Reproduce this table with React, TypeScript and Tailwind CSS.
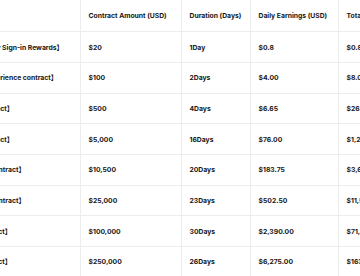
import React from "react";

type Plan = {
  name: string;
  amount: string;
  days: string;
  daily: string;
  total: string;
};

const plans: Plan[] = [
  { name: "【Daily Sign-in Rewards】", amount: "$20", days: "1Day", daily: "$0.8", total: "$0.8" },
  { name: "【Experience contract】", amount: "$100", days: "2Days", daily: "$4.00", total: "$8.00" },
  { name: "【Impact】", amount: "$500", days: "4Days", daily: "$6.65", total: "$26.60" },
  { name: "【Impact】", amount: "$5,000", days: "16Days", daily: "$76.00", total: "$1,216.00" },
  { name: "【X contract】", amount: "$10,500", days: "20Days", daily: "$183.75", total: "$3,675.00" },
  { name: "【X contract】", amount: "$25,000", days: "23Days", daily: "$502.50", total: "$11,557.50" },
  { name: "【Select】", amount: "$100,000", days: "30Days", daily: "$2,390.00", total: "$71,700.00" },
  { name: "【Select】", amount: "$250,000", days: "26Days", daily: "$6,275.00", total: "$163,150.00" },
];

const cell =
  "h-[30.7px] px-[8px] text-left align-middle border-r border-b border-[#ececec] whitespace-nowrap";

export default function App() {
  return (
    <div className="w-[360px] h-[276px] overflow-hidden bg-white">
      {/* table is scrolled sideways, first column partly hidden */}
      <table className="-ml-[31px] w-[512px] min-w-[512px] table-fixed border-collapse font-['Inter','Noto_Sans_CJK_SC',sans-serif] text-[6.8px] leading-[9px] font-bold text-[#161616]">
        <thead>
          <tr>
            <th className={`${cell} h-[31.7px] w-[111px]`}>Plan</th>
            <th className={`${cell} h-[31.7px] w-[101px]`}>Contract Amount (USD)</th>
            <th className={`${cell} h-[31.7px] w-[69px]`}>Duration (Days)</th>
            <th className={`${cell} h-[31.7px] w-[88px]`}>Daily Earnings (USD)</th>
            <th className={`${cell} h-[31.7px] w-[143px]`}>Total Earnings (USD)</th>
          </tr>
        </thead>
        <tbody>
          {plans.map((p, i) => (
            <tr key={i}>
              <td className={cell}>{p.name}</td>
              <td className={cell}>{p.amount}</td>
              <td className={cell}>{p.days}</td>
              <td className={cell}>{p.daily}</td>
              <td className={cell}>{p.total}</td>
            </tr>
          ))}
        </tbody>
      </table>
    </div>
  );
}
